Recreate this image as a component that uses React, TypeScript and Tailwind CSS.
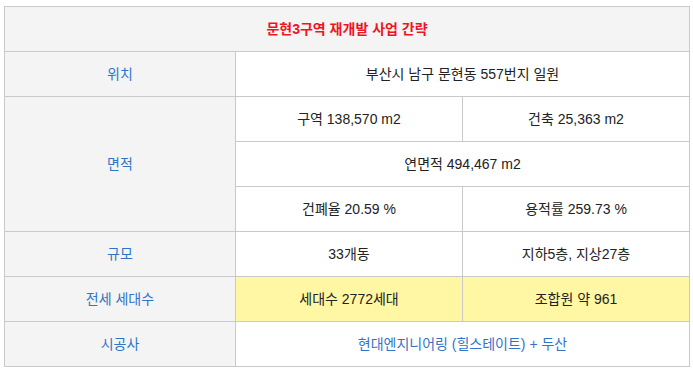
const label = 'bg-[#f4f4f4] text-[#2f74c8] flex items-center justify-center';
const cell = 'bg-white text-[#222] flex items-center justify-center';
const hl = 'bg-[#fff7a3] text-[#222] flex items-center justify-center';

export default function App() {
  return (
    <div className="min-h-screen bg-white pt-[6px] pl-[4px] font-['Liberation_Sans','Noto_Sans_CJK_KR',sans-serif] text-[14px]">
      <div className="grid w-[686px] grid-cols-[230px_226px_226px] auto-rows-[44px] gap-px bg-[#c9c9c9] p-px">
        {/* title */}
        <div className="col-span-3 flex items-center justify-center bg-[#f4f4f4] font-bold text-[#f0141e]">
          문현3구역 재개발 사업 간략
        </div>

        <div className={label}>위치</div>
        <div className={`col-span-2 ${cell}`}>부산시 남구 문현동 557번지 일원</div>

        <div className={`row-span-3 ${label}`}>면적</div>
        <div className={cell}>구역 138,570 m2</div>
        <div className={cell}>건축 25,363 m2</div>
        <div className={`col-span-2 ${cell}`}>연면적 494,467 m2</div>
        <div className={cell}>건폐율 20.59 %</div>
        <div className={cell}>용적률 259.73 %</div>

        <div className={label}>규모</div>
        <div className={cell}>33개동</div>
        <div className={cell}>지하5층, 지상27층</div>

        <div className={label}>전세 세대수</div>
        <div className={hl}>세대수 2772세대</div>
        <div className={hl}>조합원 약 961</div>

        <div className={label}>시공사</div>
        <div className="col-span-2 flex items-center justify-center bg-white text-[#2f74c8]">
          현대엔지니어링 (힐스테이트) + 두산
        </div>
      </div>
    </div>
  );
}
